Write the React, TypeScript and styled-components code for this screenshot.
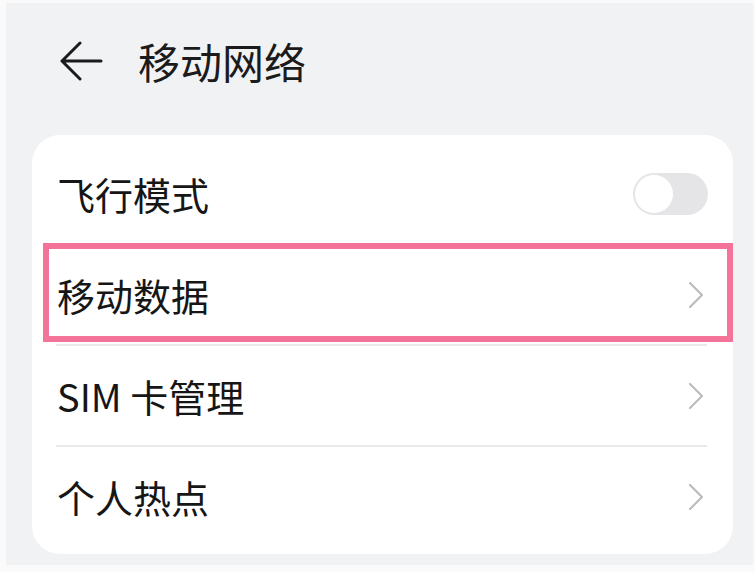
import React from 'react'
import styled, { createGlobalStyle } from 'styled-components'

const GlobalStyle = createGlobalStyle`
  html, body {
    margin: 0;
    padding: 0;
    background: #fafafb;
    font-family: "Noto Sans CJK SC", "Noto Sans", sans-serif;
  }
`

const Screen = styled.div`
  box-sizing: border-box;
  width: 747px;
  height: 562px;
  margin: 3px 2px 0 6px;
  padding: 0 20px 0 26px;
  background: #f1f2f4;
  display: flex;
  flex-direction: column;
`

const TopBar = styled.div`
  box-sizing: border-box;
  height: 132px;
  padding: 0 0 16px 27px;
  display: flex;
  align-items: center;
  gap: 35px;
`

const BackButton = styled.svg`
  width: 44px;
  height: 40px;
  flex: none;
`

const Title = styled.h1`
  margin: 0;
  font-size: 42px;
  font-weight: 400;
  color: #1b1b1b;
  line-height: 1;
`

const Card = styled.div`
  background: #ffffff;
  border-radius: 28px;
  padding: 9px 0 6px;
  display: flex;
  flex-direction: column;
`

const Row = styled.div<{ $divider?: boolean }>`
  position: relative;
  height: 99px;
  margin: 0 26px 0 24px;
  display: flex;
  align-items: center;
  justify-content: space-between;
  border-bottom: ${p => (p.$divider ? '2px solid #e9e9eb' : '2px solid transparent')};
`

const Label = styled.span`
  font-size: 38px;
  font-weight: 400;
  color: #161616;
  padding-left: 1px;
  line-height: 1;
`

const Track = styled.div<{ $on?: boolean }>`
  box-sizing: border-box;
  width: 75px;
  height: 42px;
  border-radius: 21px;
  padding: 2px;
  margin-right: -1px;
  background: ${p => (p.$on ? '#0a59f7' : '#e5e5e7')};
  display: flex;
  justify-content: ${p => (p.$on ? 'flex-end' : 'flex-start')};
`

const Knob = styled.div`
  width: 38px;
  height: 38px;
  border-radius: 50%;
  background: #ffffff;
`

const Chevron = styled.svg`
  width: 16px;
  height: 28px;
  margin-right: 3px;
`

const Highlight = styled.div`
  position: absolute;
  left: -13px;
  right: -26px;
  top: -2px;
  bottom: 2px;
  border: 6px solid #f47399;
  pointer-events: none;
`

const Arrow = () => (
  <Chevron viewBox="0 0 16 28">
    <polyline points="2,2 14,14 2,26" fill="none" stroke="#bcbcbe" strokeWidth="2.2" strokeLinecap="round" strokeLinejoin="round" />
  </Chevron>
)

interface Item {
  label: string
  toggle?: boolean
  selected?: boolean
}

const items: Item[] = [
  { label: '飞行模式', toggle: true },
  { label: '移动数据', selected: true },
  { label: 'SIM 卡管理' },
  { label: '个人热点' },
]

export default function App() {
  return (
    <>
      <GlobalStyle />
      <Screen>
        <TopBar>
          <BackButton viewBox="0 0 44 40">
            <path d="M3 20 H42 M3 20 L21 2 M3 20 L21 38" fill="none" stroke="#1b1b1b" strokeWidth="3" strokeLinecap="round" strokeLinejoin="round" />
          </BackButton>
          <Title>移动网络</Title>
        </TopBar>
        <Card>
          {items.map((it, i) => (
            <Row key={it.label} $divider={i > 0 && i < items.length - 1}>
              <Label>{it.label}</Label>
              {it.toggle ? (
                <Track>
                  <Knob />
                </Track>
              ) : (
                <Arrow />
              )}
              {it.selected && <Highlight />}
            </Row>
          ))}
        </Card>
      </Screen>
    </>
  )
}
